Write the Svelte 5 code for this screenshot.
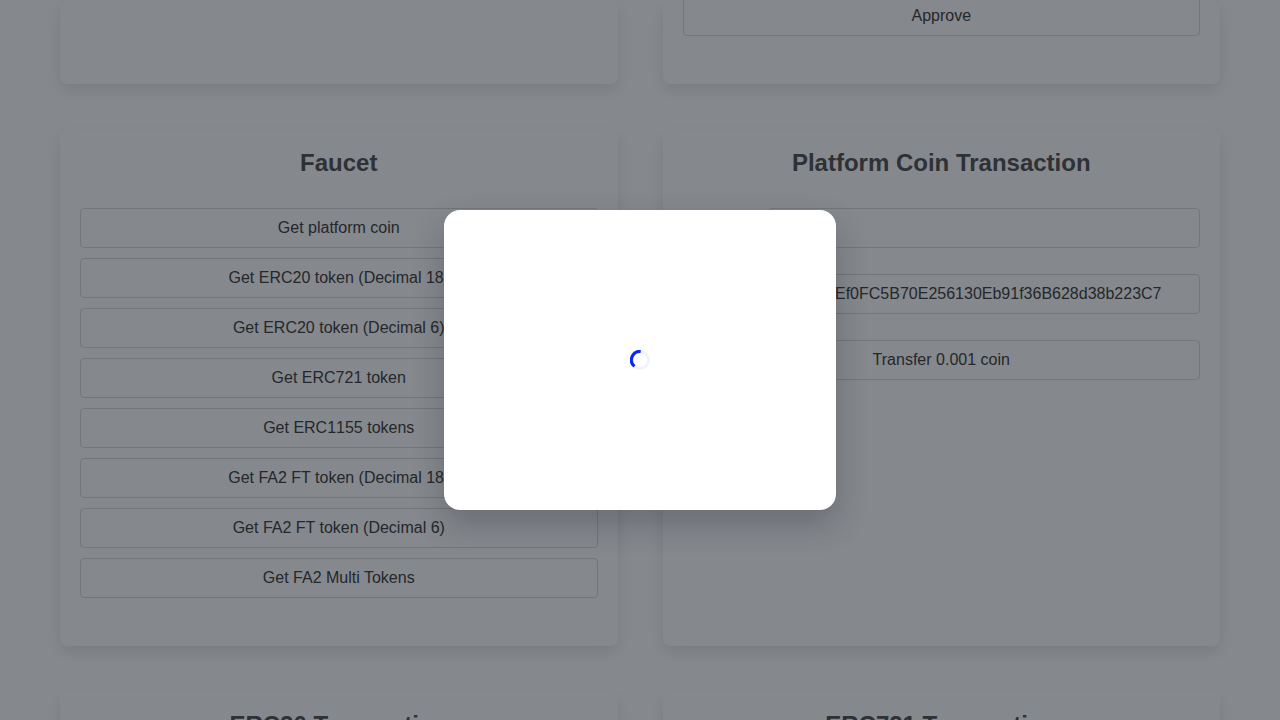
<script>
  const faucetActions = [
    'Get platform coin',
    'Get ERC20 token (Decimal 18)',
    'Get ERC20 token (Decimal 6)',
    'Get ERC721 token',
    'Get ERC1155 tokens',
    'Get FA2 FT token (Decimal 18)',
    'Get FA2 FT token (Decimal 6)',
    'Get FA2 Multi Tokens'
  ];
</script>

<div class="page">
  <main class="grid">
    <section class="card"></section>
    <section class="card end"><button>Approve</button></section>

    <section class="card">
      <h2>Faucet</h2>
      <div class="actions">
        {#each faucetActions as label}
          <button class:unkerned={label.includes('1155')}>{label}</button>
        {/each}
      </div>
    </section>
    <section class="card">
      <h2>Platform Coin Transaction</h2>
      <div class="form">
        <div class="field short"></div>
        <div class="field short address">Ef0FC5B70E256130Eb91f36B628d38b223C7</div>
        <button>Transfer 0.001 coin</button>
      </div>
    </section>

    <section class="card"><h2>ERC20 Transaction</h2></section>
    <section class="card"><h2>ERC721 Transaction</h2></section>
  </main>
</div>
<div class="overlay">
  <div class="modal" role="dialog" aria-modal="true">
    <svg class="spinner" width="20" height="20" viewBox="0 0 20 20" fill="none" stroke-width="3">
      <circle cx="10" cy="10" r="8.5" stroke="#f2f3f9" />
      <path d="M4.4 16.4A8.5 8.5 0 0 1 10.7 1.5" stroke="#0a28f5" stroke-width="3.2" />
    </svg>
  </div>
</div>

<style>
  :global(body) {
    overflow: hidden;
    background: #fff;
  }
  .page {
    height: 720px;
    overflow: hidden;
    box-sizing: border-box;
    padding: 0 60px;
    font: 16px/24px "Liberation Sans", Arial, sans-serif;
    color: #3d3d3d;
  }
  .grid {
    display: grid;
    grid-template-columns: 1fr 1fr;
    grid-template-rows: 84px 517px 517px;
    gap: 45px;
  }
  .card {
    box-sizing: border-box;
    padding: 14px 20px 48px;
    border-radius: 8px;
    box-shadow: 0 7px 15px rgba(0, 0, 0, 0.1);
  }
  .end {
    display: flex;
    align-items: flex-end;
    padding-top: 0;
  }
  h2 {
    margin: 0 0 25px;
    font-size: 24px;
    line-height: 40px;
    font-weight: 700;
    text-align: center;
    color: #505050;
  }
  button,
  .field {
    display: block;
    box-sizing: border-box;
    width: 100%;
    height: 40px;
    flex: none;
    padding: 0;
    border: 1px solid #d9d9d9;
    border-radius: 4px;
    background: transparent;
    font: inherit;
    line-height: 38px;
    color: inherit;
    text-align: center;
  }
  button.unkerned {
    font-kerning: none;
  }
  .actions,
  .form {
    display: flex;
    flex-direction: column;
    gap: 10px;
  }
  .form {
    gap: 26px;
  }
  .short {
    align-self: flex-end;
    width: 432px;
  }
  .address {
    padding-right: 37.5px;
    text-align: right;
  }
  .overlay {
    position: fixed;
    inset: 0;
    display: flex;
    align-items: center;
    justify-content: center;
    background: rgba(11, 18, 26, 0.5);
  }
  .modal {
    display: flex;
    align-items: center;
    justify-content: center;
    width: 392px;
    height: 300px;
    border-radius: 16px;
    background: #fff;
    box-shadow: 0 14px 32px rgba(20, 20, 43, 0.24);
  }
</style>
